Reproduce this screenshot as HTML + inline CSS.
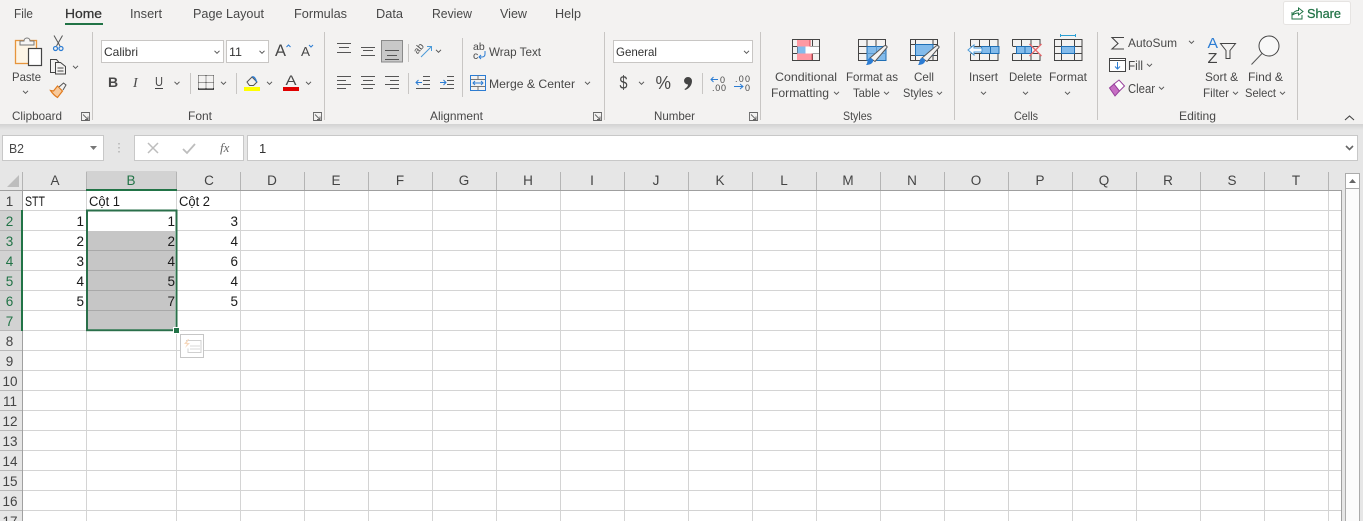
<!DOCTYPE html>
<html><head><meta charset="utf-8"><style>
html,body{margin:0;padding:0;width:1363px;height:521px;overflow:hidden;background:#fff}
svg{display:block}
text{font-family:"Liberation Sans",sans-serif;font-size:12px;fill:#484848}
.t{font-size:12.5px}
.c{font-size:13.5px;fill:#1a1a1a}
.h{font-size:13.5px;fill:#444;text-anchor:middle}
.ch{fill:none;stroke:#555;stroke-width:1}
.ln{fill:none;stroke:#555;stroke-width:1}
.bl{fill:none;stroke:#2b7cd3;stroke-width:1}
</style></head><body>
<svg width="1363" height="521" viewBox="0 0 1363 521" xmlns="http://www.w3.org/2000/svg">
<defs>
<linearGradient id="sh" x1="0" y1="0" x2="0" y2="1"><stop offset="0" stop-color="#d2d2d2"/><stop offset="1" stop-color="#e6e6e6"/></linearGradient>
<path id="cv" d="M-2.5-1.2 0 1.300 2.500-1.200" class="ch"/>
</defs>

<!-- backgrounds -->
<rect width="1363" height="124" fill="#f3f2f1"/>
<rect y="124" width="1363" height="6" fill="url(#sh)"/>
<rect y="130" width="1363" height="61" fill="#e6e6e6"/>
<rect x="1342" y="171" width="21" height="350" fill="#e6e6e6"/>

<!-- tabs -->
<text class="t" x="14" y="18" textLength="19" lengthAdjust="spacingAndGlyphs">File</text>
<text class="t" x="65" y="18" textLength="37" lengthAdjust="spacingAndGlyphs" style="fill:#333;stroke:#333;stroke-width:.25">Home</text>
<text class="t" x="130" y="18" textLength="32" lengthAdjust="spacingAndGlyphs">Insert</text>
<text class="t" x="193" y="18" textLength="71" lengthAdjust="spacingAndGlyphs">Page Layout</text>
<text class="t" x="294" y="18" textLength="53" lengthAdjust="spacingAndGlyphs">Formulas</text>
<text class="t" x="376" y="18" textLength="27" lengthAdjust="spacingAndGlyphs">Data</text>
<text class="t" x="432" y="18" textLength="40" lengthAdjust="spacingAndGlyphs">Review</text>
<text class="t" x="500" y="18" textLength="27" lengthAdjust="spacingAndGlyphs">View</text>
<text class="t" x="555" y="18" textLength="26" lengthAdjust="spacingAndGlyphs">Help</text>
<rect x="65" y="23" width="38" height="2" fill="#217346"/>

<!-- share -->
<rect x="1283.500" y="1.500" width="67" height="23" rx="2" fill="#fff" stroke="#e6e4e2"/>
<path d="M1292 12v7h10v-4M1292.500 15c1-3 3-4.500 6-4.500v-2.500l4.500 3.500-4.500 3.500v-2c-2 0-4 .5-6 2" fill="none" stroke="#217346" stroke-width="1"/>
<text x="1307" y="18" textLength="34" lengthAdjust="spacingAndGlyphs" style="font-size:13px;fill:#217346;stroke:#217346;stroke-width:.25">Share</text>

<!-- separators -->
<path d="M92.500 32v88M324.500 32v88M604.500 32v88M760.500 32v88M954.500 32v88M1097.500 32v88M1297.500 32v88" stroke="#c8c6c4" fill="none"/>

<!-- clipboard -->
<rect x="15.500" y="40.500" width="21" height="23" fill="#fdf5e6" stroke="#e6953c" stroke-width="1.300"/>
<path d="M20 45v-4h4c0-4 6-4 6 0h4v4z" fill="#f6f5f4" stroke="#777"/>
<rect x="28.500" y="48.500" width="13" height="17" fill="#fff" stroke="#444" stroke-width="1.200"/>
<text x="12" y="81" textLength="29" lengthAdjust="spacingAndGlyphs">Paste</text>
<use href="#cv" x="25.500" y="92"/>
<path d="M54 35.500l6 10.500M62.500 35.500l-6 10.500" stroke="#555" fill="none"/>
<circle cx="55.500" cy="48.500" r="2" fill="none" stroke="#2b7cd3" stroke-width="1.200"/><circle cx="61" cy="48.500" r="2" fill="none" stroke="#2b7cd3" stroke-width="1.200"/>
<path d="M55.500 72.500h-5v-13h6l2.500 3" fill="none" stroke="#444" stroke-width="1"/>
<path d="M55.500 62.500h5l5 4v7.500h-10z" fill="#f3f2f1" stroke="#444" stroke-width="1"/>
<path d="M57.500 68h6M57.500 71h6" stroke="#444" fill="none"/>
<use href="#cv" x="75.500" y="67"/>
<path d="M50.500 90.500l3 .5 4-5 5 5-5 6.500c-2.500-1.500-5-4-7-7z" fill="#f8c99a" stroke="#e07b1f" stroke-width="1.200"/>
<path d="M59 87l4.500-4 2.500 2-3 5" fill="#f3f2f1" stroke="#555" stroke-width="1"/>
<text x="12" y="120" textLength="50" lengthAdjust="spacingAndGlyphs">Clipboard</text>
<path d="M81.500 112.500h8v8h-8zM83 114.500l5 5M88 116.500v3h-3" fill="none" stroke="#666" stroke-width=".9"/>

<!-- font -->
<rect x="101.500" y="40.500" width="122" height="22" fill="#fff" stroke="#c8c6c4"/>
<rect x="226.500" y="40.500" width="42" height="22" fill="#fff" stroke="#c8c6c4"/>
<text x="104" y="56" textLength="34" lengthAdjust="spacingAndGlyphs" style="fill:#333">Calibri</text>
<text x="229" y="56" textLength="13" lengthAdjust="spacingAndGlyphs" style="fill:#333">11</text>
<use href="#cv" x="217" y="52"/><use href="#cv" x="262" y="52"/>
<text x="275" y="56" style="font-size:17px" textLength="11" lengthAdjust="spacingAndGlyphs">A</text>
<path d="M286.500 47l2-2 2 2" fill="none" stroke="#2b7cd3"/>
<text x="301" y="56" style="font-size:13px" textLength="9" lengthAdjust="spacingAndGlyphs">A</text>
<path d="M309 45l2 2 2-2" fill="none" stroke="#2b7cd3"/>
<text x="108" y="87" style="font-size:14px;font-weight:bold">B</text>
<text x="133" y="87" style="font-size:14px;font-style:italic;font-family:'Liberation Serif',serif">I</text>
<text x="155" y="86" style="font-size:12.5px" textLength="8" lengthAdjust="spacingAndGlyphs">U</text><rect x="155" y="88" width="8" height="1" fill="#444"/>
<use href="#cv" x="177" y="83"/>
<path d="M190.500 73v21M236.500 73v21M408.500 44v18M408.500 73v21M462.500 38v59M702.500 73v21" stroke="#c8c6c4" fill="none"/>
<path d="M198.500 75.500h15M198.500 75.500v13M213.500 75.500v13M206 75.500v13M198.500 82.500h15" stroke="#444" stroke-dasharray="1 1" fill="none"/>
<rect x="198" y="88.500" width="16" height="1.300" fill="#222"/>
<use href="#cv" x="223.500" y="83"/>
<path d="M247 82l5-5 5 5-3.500 3.500h-4z" fill="#f3f2f1" stroke="#555"/><path d="M252 77c2-1 4 2 4.500 5" fill="none" stroke="#2b7cd3" stroke-width="1.300"/>
<rect x="244" y="87" width="16" height="4" fill="#ffff00"/>
<use href="#cv" x="269.500" y="83"/>
<text x="285.500" y="85" style="font-size:14px" textLength="11" lengthAdjust="spacingAndGlyphs">A</text>
<rect x="283" y="87" width="16" height="4" fill="#e00000"/>
<use href="#cv" x="308.500" y="83"/>
<text x="188" y="120" textLength="24" lengthAdjust="spacingAndGlyphs">Font</text>
<path d="M313.500 112.500h8v8h-8zM315 114.500l5 5M320 116.500v3h-3" fill="none" stroke="#666" stroke-width=".9"/>

<!-- alignment -->
<path d="M337 43.500h14M339 47.500h10M337 52.500h14" class="ln"/>
<path d="M361 47.500h14M363 50.500h10M361 55.500h14" class="ln"/>
<rect x="381.500" y="40.500" width="21" height="21.500" fill="#c8c8c8" stroke="#8a8a8a"/>
<path d="M385 50.500h14M387 55.500h10M385 59.500h14" class="ln"/>
<text x="415" y="51" style="font-size:9.5px" transform="rotate(-50 420 50)">ab</text>
<path d="M421 57l10-10M427 46.500h4.500v4.500" fill="none" stroke="#4a9ad8"/>
<use href="#cv" x="438.500" y="51"/>
<path d="M337 76.500h14M337 80.500h9M337 84.500h14M337 88.500h9" class="ln"/>
<path d="M361 76.500h14M363 80.500h10M361 84.500h14M363 88.500h10" class="ln"/>
<path d="M385 76.500h14M390 80.500h9M385 84.500h14M390 88.500h9" class="ln"/>
<path d="M423 76.500h7M423 80.500h7M423 84.500h7M416 88.500h14" class="ln"/><path d="M422 82.500h-6M418.500 80l-2.500 2.500 2.500 2.500" class="bl"/>
<path d="M447 76.500h7M447 80.500h7M447 84.500h7M440 88.500h14" class="ln"/><path d="M440 82.500h6M443.500 80l2.500 2.500-2.500 2.500" class="bl"/>
<text x="473" y="50" style="font-size:10.5px">ab</text><text x="473" y="59" style="font-size:10.5px">c</text>
<path d="M485 51v3c0 2-1 3-3 3h-3M481 55l-2 2 2 2" class="bl"/>
<text x="489" y="56" textLength="52" lengthAdjust="spacingAndGlyphs">Wrap Text</text>
<rect x="470.500" y="75.500" width="15" height="15" fill="none" stroke="#2b7cd3"/>
<path d="M471 79.500h14M471 86.500h14M478 75.500v4M478 86.500v4" stroke="#777" fill="none"/>
<path d="M473 83h10M475 81l-2 2 2 2M481 81l2 2-2 2" class="bl"/>
<text x="489" y="88" textLength="86" lengthAdjust="spacingAndGlyphs">Merge &amp; Center</text>
<use href="#cv" x="587.500" y="83"/>
<text x="430" y="120" textLength="53" lengthAdjust="spacingAndGlyphs">Alignment</text>
<path d="M593.500 112.500h8v8h-8zM595 114.500l5 5M600 116.500v3h-3" fill="none" stroke="#666" stroke-width=".9"/>

<!-- number -->
<rect x="613.500" y="40.500" width="139" height="22" fill="#fff" stroke="#c8c6c4"/>
<text x="616" y="56" textLength="41" lengthAdjust="spacingAndGlyphs" style="fill:#333">General</text>
<use href="#cv" x="746.500" y="52"/>
<text x="619.500" y="89" style="font-size:18px" textLength="8" lengthAdjust="spacingAndGlyphs">$</text>
<use href="#cv" x="641.500" y="83"/>
<text x="655.500" y="89" style="font-size:18px" textLength="15.5" lengthAdjust="spacingAndGlyphs">%</text>
<path d="M684 81a4 4 0 1 1 8 0c0 4-3 8-7 9l-.5-1c2-1 3.500-3 3.500-4.500a4 4 0 0 1-4-3.500z" fill="#444"/>
<text x="720" y="83" style="font-size:9px">0</text><text x="712" y="91" style="font-size:9px" textLength="14">.00</text>
<path d="M711 79.500h7M713.500 77l-2.500 2.500 2.500 2.500" class="bl"/>
<text x="735" y="82" style="font-size:9px" textLength="15">.00</text><text x="745" y="91" style="font-size:9px">0</text>
<path d="M734 86.500h9M740 84l3 2.500-3 2.500" class="bl"/>
<text x="654" y="120" textLength="41" lengthAdjust="spacingAndGlyphs">Number</text>
<path d="M749.500 112.500h8v8h-8zM751 114.500l5 5M756 116.500v3h-3" fill="none" stroke="#666" stroke-width=".9"/>

<!-- styles icons -->
<path d="M792.500 39.500h27v21h-27zM797.500 39.500v21M805.500 39.500v21M812.500 39.500v21M792.500 46.500h27M792.500 53.500h27" fill="none" stroke="#444"/>
<rect x="797" y="39" width="13" height="7.500" fill="#ff99a3"/>
<rect x="797" y="53.500" width="15" height="7" fill="#ff99a3"/>
<rect x="805.500" y="46.500" width="14" height="7" fill="#fff"/>
<rect x="797.500" y="46.500" width="8" height="7" fill="#83bbeb"/>
<path d="M797.500 39.500h12.500v7M812 53.500v7h-14.500" fill="none" stroke="#d84a55"/>
<path d="M792.500 39.500h27v21h-27z" fill="none" stroke="#444"/>

<path d="M858.500 39.500h27v21h-27zM867 39.500v21M876 39.500v21M858.500 46.500h27M858.500 53.500h27" fill="none" stroke="#444"/>
<rect x="867" y="46.500" width="19" height="14" fill="#83bbeb" stroke="#1f6fb5"/>
<path d="M876.500 46.500v14M867 53.500h19" stroke="#5a9ad0" fill="none"/>
<path d="M870 58l14-12c1.500-1 3.500 0 3 1.500l-12 14z" fill="#f3f2f1" stroke="#555"/>
<path d="M866 65c3 0 6-1 7-3.500 .5-2-1-3.500-3-3.500-3 0-2 5-4 7z" fill="#2b7cd3"/>

<path d="M910.500 39.500h27v21h-27zM915.500 39.500v21M933 39.500v21M910.500 44.500h27M910.500 55.500h27" fill="none" stroke="#444"/>
<rect x="915.500" y="44.500" width="17.500" height="11" fill="#83bbeb" stroke="#1f6fb5"/>
<path d="M922 58l14-12c1.500-1 3.500 0 3 1.500l-12 14z" fill="#f3f2f1" stroke="#555"/>
<path d="M918 65c3 0 6-1 7-3.500 .5-2-1-3.500-3-3.500-3 0-2 5-4 7z" fill="#2b7cd3"/>
<text x="775" y="81" textLength="62" lengthAdjust="spacingAndGlyphs">Conditional</text>
<text x="771" y="97" textLength="58" lengthAdjust="spacingAndGlyphs">Formatting</text><use href="#cv" x="836.500" y="93"/>
<text x="846" y="81" textLength="52" lengthAdjust="spacingAndGlyphs">Format as</text>
<text x="853" y="97" textLength="27" lengthAdjust="spacingAndGlyphs">Table</text><use href="#cv" x="886.500" y="93"/>
<text x="914" y="81" textLength="20" lengthAdjust="spacingAndGlyphs">Cell</text>
<text x="903" y="97" textLength="30" lengthAdjust="spacingAndGlyphs">Styles</text><use href="#cv" x="939.500" y="93"/>
<text x="843" y="120" textLength="29" lengthAdjust="spacingAndGlyphs">Styles</text>

<!-- cells icons -->
<path d="M970.500 46v-6.500h27.500V46M970.500 54v6.500h27.500V54M979.500 39.500v7M989.500 39.500v7M979.500 53.500v7M989.500 53.500v7M970.500 46.500h11M970.500 53.500h11" fill="none" stroke="#444"/>
<rect x="981.500" y="46.500" width="17.500" height="7" fill="#83bbeb" stroke="#1f6fb5"/><path d="M990.500 46.500v7" stroke="#1f6fb5"/>
<path d="M968 50l6-5v3h8v4h-8v3z" fill="#f8fbfe" stroke="#4a9ad8"/>
<path d="M1012.500 46v-6.500h27.500V46M1012.500 54v6.500h27.500V54M1021.500 39.500v7M1031 39.500v7M1021.500 53.500v7M1031 53.500v7M1012.500 46.500h27M1012.500 53.500h27" fill="none" stroke="#444"/>
<rect x="1016.500" y="46.500" width="15" height="7" fill="#83bbeb" stroke="#1f6fb5"/><path d="M1025 46.500v7" stroke="#1f6fb5"/>
<path d="M1029.500 44l12 12M1041.500 44l-12 12" stroke="#ea6a6e" stroke-width="1.300" fill="none"/>
<path d="M1060.500 35.500h15M1060.500 34v3M1075.500 34v3" stroke="#2b9fd3" fill="none"/>
<path d="M1054.500 39.500h27.500v21h-27.500zM1061.500 39.500v21M1074.500 39.500v21M1054.500 46.500h27.500M1054.500 53.500h27.500" fill="none" stroke="#444"/>
<rect x="1061.500" y="46.500" width="13" height="7" fill="#83bbeb" stroke="#1f6fb5"/>
<text x="969" y="81" textLength="29" lengthAdjust="spacingAndGlyphs">Insert</text><use href="#cv" x="983.500" y="93"/>
<text x="1009" y="81" textLength="33" lengthAdjust="spacingAndGlyphs">Delete</text><use href="#cv" x="1025.500" y="93"/>
<text x="1049" y="81" textLength="38" lengthAdjust="spacingAndGlyphs">Format</text><use href="#cv" x="1067.500" y="93"/>
<text x="1014" y="120" textLength="24" lengthAdjust="spacingAndGlyphs">Cells</text>

<!-- editing -->
<path d="M1124 37.500h-12l6 6-6 5.500h12" fill="none" stroke="#444" stroke-width="1.100"/>
<text x="1128" y="47" textLength="49" lengthAdjust="spacingAndGlyphs">AutoSum</text><use href="#cv" x="1191.500" y="42"/>
<rect x="1109.500" y="58.500" width="16" height="13" fill="#fff" stroke="#444"/><path d="M1109.500 60.500h16" stroke="#444" fill="none"/>
<path d="M1117.500 62v7M1115 66.500l2.500 2.500 2.500-2.500" class="bl"/>
<text x="1128" y="70" style="font-size:12.5px" textLength="15" lengthAdjust="spacingAndGlyphs">Fill</text><use href="#cv" x="1149.500" y="65"/>
<path d="M1109.500 88l5.500 8 4.500-5-5.500-7z" fill="#c66ec3" stroke="#96409a"/><path d="M1114 84l5-4 5.500 6-5 5z" fill="#fff" stroke="#96409a"/>
<text x="1128" y="93" style="font-size:12.5px" textLength="27" lengthAdjust="spacingAndGlyphs">Clear</text><use href="#cv" x="1161.500" y="88"/>
<text x="1207.500" y="48" style="font-size:15px;fill:#2b7cd3" textLength="10.500" lengthAdjust="spacingAndGlyphs">A</text>
<text x="1207.500" y="63" style="font-size:15px;fill:#444" textLength="10" lengthAdjust="spacingAndGlyphs">Z</text>
<path d="M1220.500 43.500h15l-5.500 7v8h-4v-8z" fill="none" stroke="#444" stroke-width="1"/>
<text x="1205" y="81" textLength="33" lengthAdjust="spacingAndGlyphs">Sort &amp;</text>
<text x="1203" y="97" textLength="26" lengthAdjust="spacingAndGlyphs">Filter</text><use href="#cv" x="1235.500" y="93"/>
<circle cx="1269" cy="46" r="10" fill="#f8f8f8" stroke="#444" stroke-width="1"/><path d="M1262 53.500l-10.500 11" stroke="#555" fill="none"/>
<text x="1248" y="81" textLength="35" lengthAdjust="spacingAndGlyphs">Find &amp;</text>
<text x="1245" y="97" textLength="31" lengthAdjust="spacingAndGlyphs">Select</text><use href="#cv" x="1282.500" y="93"/>
<text x="1179" y="120" textLength="37" lengthAdjust="spacingAndGlyphs">Editing</text>
<path d="M1345 120l4.500-4 4.500 4" fill="none" stroke="#444" stroke-width="1.100"/>

<!-- formula bar -->
<rect x="2.500" y="135.500" width="101" height="25" fill="#fff" stroke="#c8c8c8"/>
<text x="9" y="153" style="font-size:13px" textLength="15" lengthAdjust="spacingAndGlyphs">B2</text>
<path d="M90 146h7l-3.500 4z" fill="#777"/>
<path d="M119 143v1.500M119 147v1.500M119 151v1.500" stroke="#999" fill="none"/>
<rect x="134.500" y="135.500" width="109" height="25" fill="#fff" stroke="#c8c8c8"/>
<rect x="247.500" y="135.500" width="1110" height="25" fill="#fff" stroke="#c8c8c8"/>
<path d="M148 143l10 10M158 143l-10 10" stroke="#bdbdbd" stroke-width="1.500" fill="none"/>
<path d="M183 149l4 4 8-9" stroke="#bdbdbd" stroke-width="1.800" fill="none"/>
<text x="220" y="152" style="font-size:13px;font-style:italic;font-family:'Liberation Serif',serif;fill:#666">fx</text>
<text x="259" y="153" class="c" style="fill:#333;font-size:13px">1</text>
<path d="M1346 146l3.500 3.500 3.500-3.500" fill="none" stroke="#666" stroke-width="1.600"/>

<!-- column header highlight -->
<rect x="86" y="171" width="91" height="19" fill="#d2d2d2"/>
<path d="M22.500 172v18M304.500 172v18M368.500 172v18M432.500 172v18M496.500 172v18M560.500 172v18M624.500 172v18M688.500 172v18M752.500 172v18M816.500 172v18M880.500 172v18M944.500 172v18M1008.500 172v18M1072.500 172v18M1136.500 172v18M1200.500 172v18M1264.500 172v18M1328.500 172v18M86.500 172v18M176.500 172v18M240.500 172v18" stroke="#b4b4b4" fill="none"/>
<path d="M0 190.500h86M177 190.500h1165" stroke="#9f9f9f" fill="none"/>
<rect x="86" y="189" width="91" height="2" fill="#217346"/>
<path d="M19 175v12H7z" fill="#bdbdbd"/>

<!-- sheet -->
<rect x="0" y="191" width="22" height="330" fill="#e6e6e6"/>
<rect x="23" y="191" width="1318" height="330" fill="#fff"/>
<rect x="0" y="211" width="22" height="120" fill="#d2d2d2"/>
<path d="M0 210.500h22M0 230.500h22M0 250.500h22M0 270.500h22M0 290.500h22M0 310.500h22M0 330.500h22M0 350.500h22M0 370.500h22M0 390.500h22M0 410.500h22M0 430.500h22M0 450.500h22M0 470.500h22M0 490.500h22M0 510.500h22" stroke="#b8b8b8" fill="none"/>
<path d="M22.500 190v331" stroke="#a0a0a0" fill="none"/>
<rect x="21" y="210" width="2" height="121" fill="#217346"/>
<path d="M23 210.500h1318M23 230.500h1318M23 250.500h1318M23 270.500h1318M23 290.500h1318M23 310.500h1318M23 330.500h1318M23 350.500h1318M23 370.500h1318M23 390.500h1318M23 410.500h1318M23 430.500h1318M23 450.500h1318M23 470.500h1318M23 490.500h1318M23 510.500h1318" stroke="#d4d4d4" fill="none"/>
<path d="M86.500 191v330M176.500 191v330M240.500 191v330M304.500 191v330M368.500 191v330M432.500 191v330M496.500 191v330M560.500 191v330M624.500 191v330M688.500 191v330M752.500 191v330M816.500 191v330M880.500 191v330M944.500 191v330M1008.500 191v330M1072.500 191v330M1136.500 191v330M1200.500 191v330M1264.500 191v330M1328.500 191v330" stroke="#d4d4d4" fill="none"/>
<path d="M1341.500 190v331" stroke="#9f9f9f" fill="none"/>

<!-- selection -->
<rect x="88" y="211" width="87.500" height="118" fill="#fff"/>
<rect x="88" y="231" width="87" height="98" fill="#c6c6c6"/>
<path d="M88 250.500h87M88 270.500h87M88 290.500h87M88 310.500h87" stroke="#a9a9a9" fill="none"/>
<rect x="87" y="210.500" width="89.500" height="119.700" fill="none" stroke="#2a6f4a" stroke-width="2"/>
<rect x="173.500" y="327.500" width="6" height="6" fill="#217346" stroke="#fff"/>
<rect x="180.500" y="334.500" width="23" height="23" fill="#fff" stroke="#c6c6c6"/>
<path d="M186 340.500h15v12h-13v-4" fill="none" stroke="#d0d0d0"/>
<path d="M190 346h10M190 349h10" stroke="#d8d8d8" fill="none"/>
<path d="M188 339l-4 5h3l-2 4 5-5h-3l2-4z" fill="#f7d9be"/>

<!-- column heads -->
<text class="h" x="55" y="185">A</text>
<text class="h" x="131" y="185" style="fill:#217346">B</text>
<text class="h" x="209" y="185">C</text>
<text class="h" x="272" y="185">D</text>
<text class="h" x="336" y="185">E</text>
<text class="h" x="400" y="185">F</text>
<text class="h" x="464" y="185">G</text>
<text class="h" x="528" y="185">H</text>
<text class="h" x="592" y="185">I</text>
<text class="h" x="656" y="185">J</text>
<text class="h" x="720" y="185">K</text>
<text class="h" x="784" y="185">L</text>
<text class="h" x="848" y="185">M</text>
<text class="h" x="912" y="185">N</text>
<text class="h" x="976" y="185">O</text>
<text class="h" x="1040" y="185">P</text>
<text class="h" x="1104" y="185">Q</text>
<text class="h" x="1168" y="185">R</text>
<text class="h" x="1232" y="185">S</text>
<text class="h" x="1296" y="185">T</text>
<!-- row heads -->
<text class="h" x="9.500" y="206">1</text>
<text class="h" x="9.500" y="226" style="fill:#217346">2</text>
<text class="h" x="9.500" y="246" style="fill:#217346">3</text>
<text class="h" x="9.500" y="266" style="fill:#217346">4</text>
<text class="h" x="9.500" y="286" style="fill:#217346">5</text>
<text class="h" x="9.500" y="306" style="fill:#217346">6</text>
<text class="h" x="9.500" y="326" style="fill:#217346">7</text>
<text class="h" x="9.500" y="346">8</text>
<text class="h" x="9.500" y="366">9</text>
<text class="h" x="10" y="386">10</text>
<text class="h" x="10" y="406">11</text>
<text class="h" x="10" y="426">12</text>
<text class="h" x="10" y="446">13</text>
<text class="h" x="10" y="466">14</text>
<text class="h" x="10" y="486">15</text>
<text class="h" x="10" y="506">16</text>
<text class="h" x="10" y="526">17</text>
<!-- cells -->
<text class="c" x="25" y="206" textLength="20" lengthAdjust="spacingAndGlyphs">STT</text>
<text class="c" x="89" y="206" textLength="31" lengthAdjust="spacingAndGlyphs">Cột 1</text>
<text class="c" x="179" y="206" textLength="31" lengthAdjust="spacingAndGlyphs">Cột 2</text>
<g text-anchor="end">
<text class="c" x="84" y="226">1</text><text class="c" x="84" y="246">2</text><text class="c" x="84" y="266">3</text><text class="c" x="84" y="286">4</text><text class="c" x="84" y="306">5</text>
<text class="c" x="175" y="226">1</text><text class="c" x="175" y="246">2</text><text class="c" x="175" y="266">4</text><text class="c" x="175" y="286">5</text><text class="c" x="175" y="306">7</text>
<text class="c" x="238" y="226">3</text><text class="c" x="238" y="246">4</text><text class="c" x="238" y="266">6</text><text class="c" x="238" y="286">4</text><text class="c" x="238" y="306">5</text>
</g>

<!-- scrollbar -->
<rect x="1345.500" y="173.500" width="14" height="348" fill="#fbfbfb" stroke="#ababab"/>
<rect x="1346" y="174" width="13" height="14" fill="#fff"/>
<path d="M1346 188.500h13" stroke="#ababab" fill="none"/>
<path d="M1349 183l3.500-4 3.500 4z" fill="#666"/>
</svg>
</body></html>
